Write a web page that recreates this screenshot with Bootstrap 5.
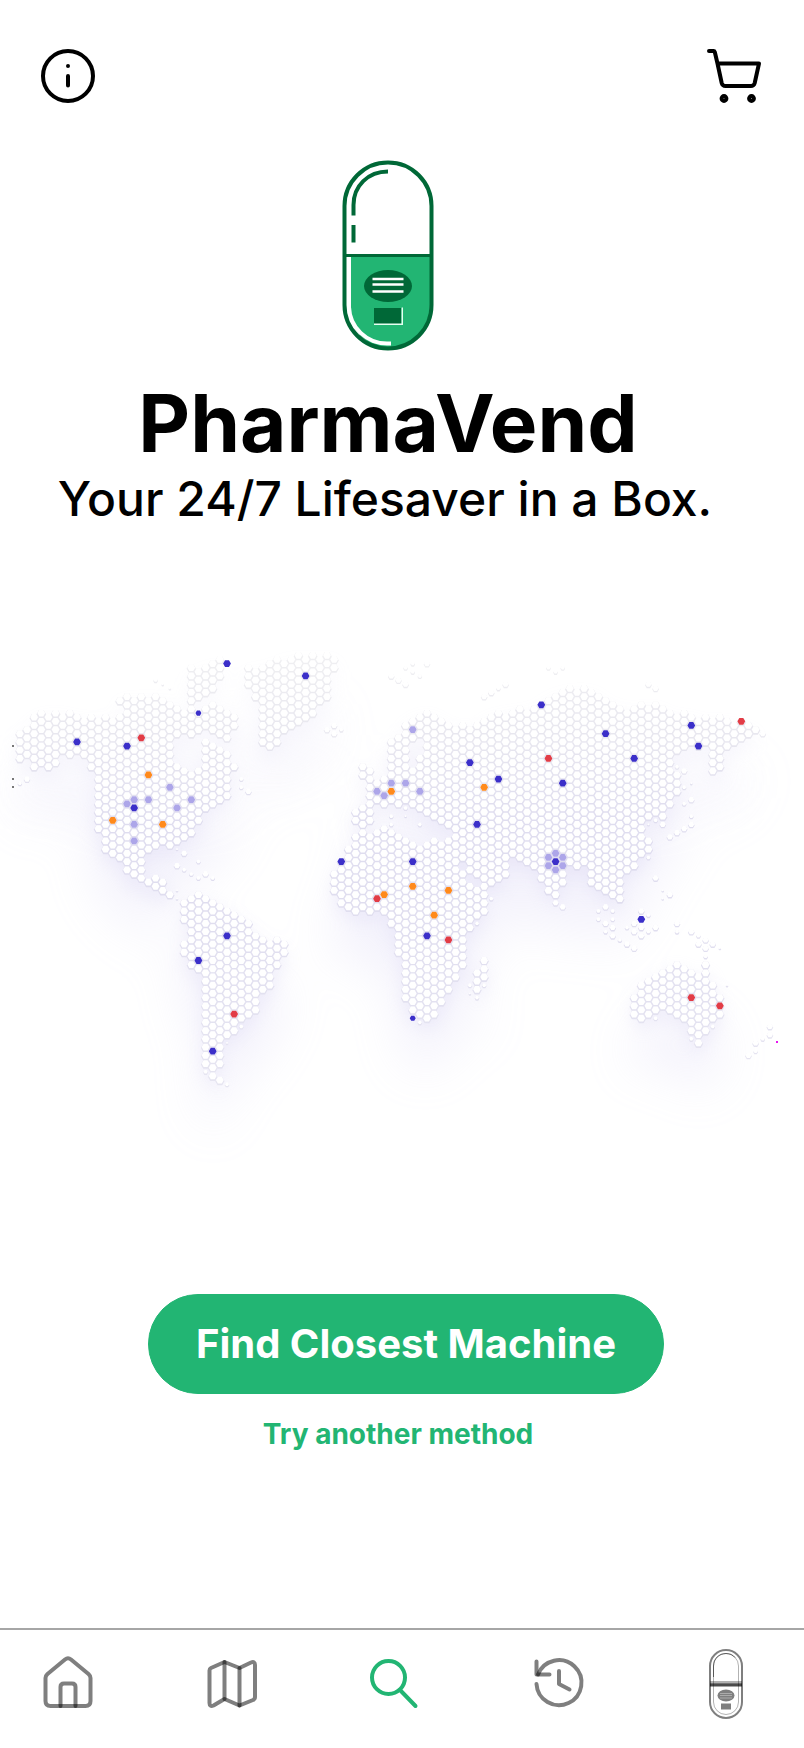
<!DOCTYPE html>
<html lang="en">
<head>
<meta charset="utf-8">
<meta name="viewport" content="width=device-width, initial-scale=1">
<title>PharmaVend</title>
<link href="https://cdn.jsdelivr.net/npm/bootstrap@5.3.0/dist/css/bootstrap.min.css" rel="stylesheet">
<style>
  :root { --pv-green: #22b573; --pv-dark: #006837; }
  body { font-family: Inter, "Liberation Sans", sans-serif; color: #000; background: #fff; }
  .app-header { padding: 49px 41px 0; }
  .icon-btn { width: 54px; height: 54px; color: #000; }
  .icon-btn svg, .tab-link svg { display: block; overflow: visible; }
  .hero { padding: 57px 28px 0 0; }
  .brand { font-size: 80px; line-height: 94px; margin-top: 25px; }
  .tagline { font-size: 48px; line-height: 58px; padding-right: 6px; }
  .world { margin-top: 112px; }
  .actions { padding-top: 124px; }
  .find-btn { width: 516px; max-width: 94%; height: 100px; font-size: 40px; margin-left: 8px;
    --bs-btn-bg: var(--pv-green); --bs-btn-border-color: var(--pv-green); --bs-btn-color: #fff;
    --bs-btn-hover-bg: #1c9a62; --bs-btn-hover-border-color: #1c9a62; --bs-btn-hover-color: #fff; }
  .alt-link { font-size: 28px; line-height: 34px; margin-top: 23px; margin-right: 8px; color: var(--pv-green); }
  .tab-bar { border-top: 2px solid #a6a6a6; padding: 19px 51px 29px 41px; }
  .tab-link { width: 54px; height: 70px; color: #000; }
  .tab-link.active { color: var(--pv-green); }
  .tab-link:not(.active) svg { stroke-opacity: .5; fill-opacity: .5; }
</style>
</head>
<body class="d-flex flex-column min-vh-100">

<header class="app-header d-flex justify-content-between">
  <button type="button" class="icon-btn btn p-0 border-0" aria-label="Information">
    <svg width="54" height="54" viewBox="0 0 54 54" fill="none" stroke="currentColor" stroke-width="4" stroke-linecap="round">
      <circle cx="27" cy="27" r="25"/><path d="M27 27v9.500M27 17v.01"/>
    </svg>
  </button>
  <button type="button" class="icon-btn btn p-0 border-0" aria-label="Cart">
    <svg width="54" height="54" viewBox="1 0 54 54" fill="none" stroke="currentColor" stroke-width="4" stroke-linecap="round" stroke-linejoin="round">
      <path d="M1 2h4.500q1 0 1.300 1L9.500 14.500H51l-4.300 19.500q-.8 3-3.800 3H17.500q-3 0-3.800-3L9.500 14.500"/>
      <circle cx="16" cy="49.500" r="2.400" stroke-width="4"/><circle cx="43.500" cy="49.500" r="2.400" stroke-width="4"/>
    </svg>
  </button>
</header>

<main class="d-flex flex-column flex-grow-1">
  <section class="hero text-center">
    <svg width="92" height="191" viewBox="0 0 92 191" fill="none" role="img" aria-label="PharmaVend logo">
      <path d="M7 96h81v50a42 42 0 0 1-42 42A39 42 0 0 1 7 146z" fill="#22b573"/>
      <path d="M7 97v50a38 38 0 0 0 38 36.500h4" stroke="#fff" stroke-width="4"/>
      <rect x="2.500" y="2.500" width="87" height="186" rx="43.500" stroke="#006837" stroke-width="4"/>
      <path d="M2.500 95.500h87" stroke="#006837" stroke-width="3"/>
      <path d="M46 11.500C26 11.500 11.500 26 11.500 45v10.500M11.500 65v17.500" stroke="#006837" stroke-width="4"/>
      <ellipse cx="46" cy="126" rx="24" ry="16" fill="#006837"/>
      <path d="M30.500 119h31M30.500 124.500h31M30.500 131.500h31" stroke="#fff" stroke-width="2.400"/>
      <path d="M32 148h27v16H32z" fill="#006837"/><path d="M32 164.300h28.300V147.500" stroke="#e6fff2" stroke-width="1.400"/>
    </svg>
    <h1 class="brand fw-bold mb-0">PharmaVend</h1>
    <p class="tagline fw-medium mb-0">Your 24/7 Lifesaver in a Box.</p>
  </section>

  <svg id="world" class="world w-100 d-block" viewBox="0 640 804 530" role="img" aria-label="World map of vending machines">
    <defs>
      <filter id="haze" x="-20%" y="-20%" width="140%" height="150%"><feGaussianBlur stdDeviation="25"/></filter>
      <filter id="near" x="-10%" y="-10%" width="120%" height="120%"><feGaussianBlur stdDeviation="8"/></filter>
      <linearGradient id="gap" gradientUnits="userSpaceOnUse" x1="0" y1="650" x2="0" y2="1080">
        <stop offset="0" stop-color="#f0f0f2"/><stop offset=".2" stop-color="#e8e7ef"/>
        <stop offset=".4" stop-color="#dfddef"/><stop offset=".65" stop-color="#e0deef"/><stop offset="1" stop-color="#e6e5f1"/>
      </linearGradient>
      <linearGradient id="fade" gradientUnits="userSpaceOnUse" x1="0" y1="660" x2="0" y2="860">
        <stop offset="0" stop-color="#fff" stop-opacity=".2"/><stop offset="1" stop-color="#fff"/>
      </linearGradient>
      <mask id="northFade" maskUnits="userSpaceOnUse" x="-50" y="600" width="900" height="620"><rect x="-50" y="600" width="900" height="620" fill="url(#fade)"/></mask>
    </defs>
    <g mask="url(#northFade)">
      <g id="shadowFar" fill="#c9c3f0" opacity=".22" filter="url(#haze)" transform="translate(0 50)"></g>
      <g id="shadowNear" fill="#cdc8ee" opacity=".22" filter="url(#near)" transform="translate(0 9)"></g>
    </g>
    <path id="tiles" fill="url(#gap)"/>
    <path id="hexes" fill="#fff"/>
    <g id="machines"></g>
    <path d="M12 745h2v2h-2zM12 778h2v2h-2zM12 786h2v2h-2z" fill="#777"/>
    <path d="M776 1041h2v2h-2z" fill="#e815f0"/>
  </svg>

  <section class="actions d-flex flex-column align-items-center">
    <button type="button" class="find-btn btn rounded-pill fw-bold p-0">Find Closest Machine</button>
    <a href="#" class="alt-link fw-bold text-decoration-none">Try another method</a>
  </section>
</main>

<nav class="tab-bar d-flex justify-content-between" aria-label="Main">
  <a href="#" class="tab-link" aria-label="Home">
    <svg width="54" height="70" viewBox="0 0 54 70" fill="none" stroke="currentColor" stroke-width="4" stroke-linecap="round" stroke-linejoin="round">
      <path d="M24 10.500q3-2.500 6 0L47.500 25q2 1.800 2 4v23q0 5-5 5h-35q-5 0-5-5V29q0-2.200 2-4z"/>
      <path d="M19.500 57V38q0-3.500 3.500-3.500h8q3.500 0 3.500 3.500v19"/>
    </svg>
  </a>
  <a href="#" class="tab-link" aria-label="Map">
    <svg width="54" height="70" viewBox="1 0 54 70" fill="none" stroke="currentColor" stroke-width="4" stroke-linecap="round" stroke-linejoin="round">
      <path d="M19.500 13L6 19q-1.500.8-1.500 2.500V54q0 4 4 2.500L19.500 50l15 6.500L48 51q2-1 2-3V16q0-4-4-2.500L34.500 19z"/>
      <path d="M19.500 13v37M34.500 19v37.500"/>
    </svg>
  </a>
  <a href="#" class="tab-link active" aria-label="Search" aria-current="page">
    <svg width="54" height="70" viewBox="3 0 54 70" fill="none" stroke="currentColor" stroke-width="4" stroke-linecap="round">
      <circle cx="21.500" cy="28.500" r="16.500"/><path d="M33 41l15.500 16"/>
    </svg>
  </a>
  <a href="#" class="tab-link" aria-label="History">
    <svg width="54" height="70" viewBox="3 0 54 70" fill="none" stroke="currentColor" stroke-width="4" stroke-linecap="round" stroke-linejoin="round">
      <path d="M4.500 35A22.500 22.500 0 1 0 6 25.500"/>
      <path d="M4.500 12.500v13h13"/><path d="M27 22v13l10.500 5.500"/>
    </svg>
  </a>
  <a href="#" class="tab-link d-flex justify-content-center" aria-label="Machine">
    <svg width="34" height="70" viewBox="0 0 34 70" fill="none" stroke="currentColor">
      <rect x="1" y="1" width="32" height="68" rx="16" stroke-width="2"/>
      <rect x="4.500" y="4.500" width="25" height="61" rx="12.500" stroke-width="1" stroke-opacity=".3"/>
      <path d="M4.500 28V17C4.500 9.500 10 4.500 17 4.500c4 0 7 1.500 9 4" stroke-width="1"/>
      <path d="M1 33.500h32" stroke-width="3" stroke-opacity=".3"/><path d="M1 36h32" stroke-width="3" stroke-opacity=".7"/>
      <ellipse cx="17" cy="46.500" rx="8.500" ry="6" fill="currentColor" stroke="none"/>
      <path d="M11 44.500h12M11 46.500h12M11 49h12" stroke="#fff" stroke-width=".7"/>
      <path d="M12 54.500h10v6H12z" fill="currentColor" stroke="none"/>
    </svg>
  </a>
</nav>

<script src="https://cdn.jsdelivr.net/npm/bootstrap@5.3.0/dist/js/bootstrap.bundle.min.js"></script>
<script>
// Land outlines; the hexagon grid fills every cell whose centre lies inside one.
const land = [
  // North America
  "17,730 28,722 36,712 50,709 60,709 75,713 90,715 118,714 128,712 130,706 117,704 118,700 124,694 135,695 150,693 160,695 172,697 173,709 186,707 189,690 189,668 205,664 215,659 222,659 223,676 212,692 204,697 196,706 205,702 215,704 228,705 236,720 236,730 228,743 216,738 209,729 200,729 188,736 173,740 173,760 180,768 200,766 202,742 208,739 218,748 232,755 237,765 232,778 230,797 215,803 206,812 202,822 192,834 180,842 168,848 150,850 143,855 143,868 148,878 160,870 166,880 172,892 172,898 160,893 148,888 134,880 124,872 123,862 116,858 108,854 103,850 97,832 92,815 94,790 94,775 86,763 76,757 63,752 58,768 34,770 27,762 17,762",
  // Greenland
  "245,664 262,664 278,658 290,653 336,653 338,666 332,675 330,700 318,710 310,720 290,728 281,740 272,752 260,744 260,725 256,700 254,690 245,690",
  // South America
  "181,900 190,896 200,893 212,896 226,903 240,912 250,920 258,932 268,938 280,940 287,945 286,955 278,968 274,982 272,990 260,996 258,1008 248,1018 238,1030 228,1036 222,1042 223,1066 216,1070 222,1082 216,1082 203,1066 202,1050 203,1010 202,985 197,973 188,963 182,953 182,940 188,930 182,925",
  // Europe and Asia
  "352,812 358,803 366,798 363,790 378,776 388,775 388,766 383,750 392,738 402,730 405,718 418,712 427,708 440,715 450,721 462,724 478,724 485,714 500,710 520,707 538,704 548,694 570,687 594,687 600,694 612,701 625,705 640,705 650,702 660,704 672,712 690,712 700,717 712,717 728,717 740,720 755,726 757,733 745,738 738,746 724,750 722,762 724,768 718,773 710,770 711,750 690,750 675,757 670,768 680,775 680,795 672,806 665,825 658,818 645,818 640,822 645,830 650,840 650,852 640,862 625,872 620,880 622,895 620,901 610,898 600,890 588,880 584,868 568,870 562,885 558,897 548,893 542,880 535,868 525,862 505,858 498,850 506,866 506,876 498,882 485,888 478,880 466,870 455,855 455,828 438,826 424,818 417,806 395,804 372,806 370,828 362,830 352,825",
  // Africa
  "352,836 362,830 385,828 395,830 405,838 420,842 452,838 456,852 462,872 470,884 485,892 486,910 478,922 470,930 465,938 466,968 455,978 448,992 440,1008 438,1018 426,1020 410,1012 403,1000 402,975 398,950 394,932 388,928 388,916 386,912 355,914 340,904 333,895 332,875 340,860",
  // Australia
  "632,995 640,984 650,975 660,968 668,963 677,960 686,962 690,972 700,973 702,963 708,965 712,978 720,990 723,1010 716,1022 706,1035 698,1046 690,1036 688,1024 680,1018 668,1012 655,1014 641,1022 632,1012",
  // Britain, Madagascar
  "357,772 361,761 372,768 372,780 360,780",
  "474,970 483,958 487,965 486,982 477,993"
].map(s => s.split(" ").map(p => p.split(",").map(Number)));

// Inland water: the Baltic.
const water = [[[411,738],[421,740],[422,754],[412,764],[406,752]]];

// Islands too small for an outline: x, y, radius.
const islets = [
  [327,729,3],[334,727,3],[334,735,3],[342,733,2],[391,672,3],[398,679,3],[405,687,3],[405,671,2],[413,667,2],[413,675,2],[420,679,2],[427,667,3],
  [484,700,3],[491,696,3],[498,692,2],[505,688,3],[548,670,2],[556,675,2],[563,670,2],[648,687,3],[656,692,3],[763,732,3],
  [248,792,3],[241,788,2],[241,779,2],[20,785,2],[27,779,3],[184,853,3],[177,865,3],[205,874,3],[191,870,2],[198,862,2],[212,879,2],[198,878,2],[184,870,2],[177,850,1],[177,891,1],[177,899,1],
  [163,683,1],[170,688,1],[156,682,2],[391,816,2],[391,824,2],[405,812,2],[405,820,1],[420,824,2],[691,800,3],[691,816,2],[691,824,3],[684,829,3],[677,833,3],[670,837,3],[663,824,3],[684,804,2],[684,787,2],[684,771,3],[677,767,2],[691,783,1],[655,820,2],[648,824,1],[648,841,3],[648,850,3],[648,858,2],
  [656,878,3],[670,895,3],[663,891,1],[663,899,1],[556,903,3],[563,907,3],[605,907,3],[598,911,2],[612,911,2],[598,919,2],[605,923,3],[612,919,2],[612,928,3],[605,932,2],[612,936,3],[620,940,2],[627,944,3],[634,948,3],
  [627,928,2],[634,923,3],[634,932,3],[641,928,3],[641,936,3],[641,911,3],[648,915,2],[648,931,2],[655,928,3],[677,926,3],[677,932,2],[691,935,3],[698,938,2],[698,944,3],[705,948,3],[705,943,3],[713,947,3],[720,950,1],[705,958,2],
  [641,1018,3],[713,1026,2],[691,1039,2],[655,1018,2],[748,1058,3],[755,1051,2],[755,1045,3],[762,1041,2],[770,1034,3],[770,1028,3],[727,986,1],[227,1084,2],[205,1072,2],[420,1022,2],[427,1018,3],[470,985,2],[470,994,1],[484,985,2],[477,998,2],[491,899,2],[477,924,2],[391,915,2],[241,1026,2],[227,1043,1]
];

const machines = {
  "#3b2fc9": "77,742 127,746 227,664 134,808 306,676 470,762 498,779 477,824 341,861 413,861 541,705 606,734 634,758 691,725 698,746 563,783 556,861 641,919 227,936 198,960 213,1051 427,936 198,713,3 413,1018,3",
  "#e23c46": "141,738 741,721 548,758 377,898 448,940 234,1014 691,997 720,1006",
  "#ff8a1c": "148,775 113,820 163,824 391,791 484,787 413,886 448,890 384,894 434,915",
  "#ada6e9": "170,787 134,799 148,799 127,804 191,799 177,808 134,824 134,841 413,729 391,783 405,783 377,791 384,795 420,791 556,853 556,870 549,857 549,865 563,857 563,865"
};

const STEP_X = 7.143, STEP_Y = 4.124, X0 = 19.86, Y0 = 651.2;

function inside(poly, x, y) {
  let hit = false;
  for (let i = 0, j = poly.length - 1; i < poly.length; j = i++) {
    const [xi, yi] = poly[i], [xj, yj] = poly[j];
    if ((yi > y) !== (yj > y) && x < (xj - xi) * (y - yi) / (yj - yi) + xi) hit = !hit;
  }
  return hit;
}
function hex(x, y, r) {
  let d = "";
  for (let k = 0; k < 6; k++) {
    const a = k * Math.PI / 3;
    d += (k ? "L" : "M") + (x + r * Math.cos(a)).toFixed(2) + " " + (y + r * Math.sin(a)).toFixed(2);
  }
  return d + "z";
}
function snap(x, y) {
  const c = Math.round((x - X0) / STEP_X);
  const h = Math.round(((y - Y0) / STEP_Y - (c & 1)) / 2) * 2 + (c & 1);
  return [X0 + c * STEP_X, Y0 + h * STEP_Y];
}

let tiles = "", hexes = "";
for (let c = 0; c < 107; c++) {
  for (let h = c & 1; h < 108; h += 2) {
    const x = X0 + c * STEP_X, y = Y0 + h * STEP_Y;
    if (land.some(p => inside(p, x, y)) && !water.some(p => inside(p, x, y))) {
      tiles += hex(x, y + 1, 4.7);
      hexes += hex(x, y, 3.9);
    }
  }
}
for (const [ix, iy, r] of islets) {
  const [x, y] = snap(ix, iy);
  tiles += hex(x, y + 1, r + .4);
  hexes += hex(x, y, r);
}
document.getElementById("tiles").setAttribute("d", tiles);
document.getElementById("hexes").setAttribute("d", hexes);

const outline = land.map(p => `<polygon points="${p.map(q => q.join(",")).join(" ")}"/>`).join("");
document.getElementById("shadowFar").innerHTML = outline;
document.getElementById("shadowNear").innerHTML = outline;

document.getElementById("machines").innerHTML = Object.entries(machines).map(([color, list]) => {
  const d = list.split(" ").map(p => {
    const [px, py, r] = p.split(",").map(Number);
    return hex(...snap(px, py), r || 3.9);
  }).join("");
  return `<path d="${d}" fill="${color}"/>`;
}).join("");
</script>
</body>
</html>
